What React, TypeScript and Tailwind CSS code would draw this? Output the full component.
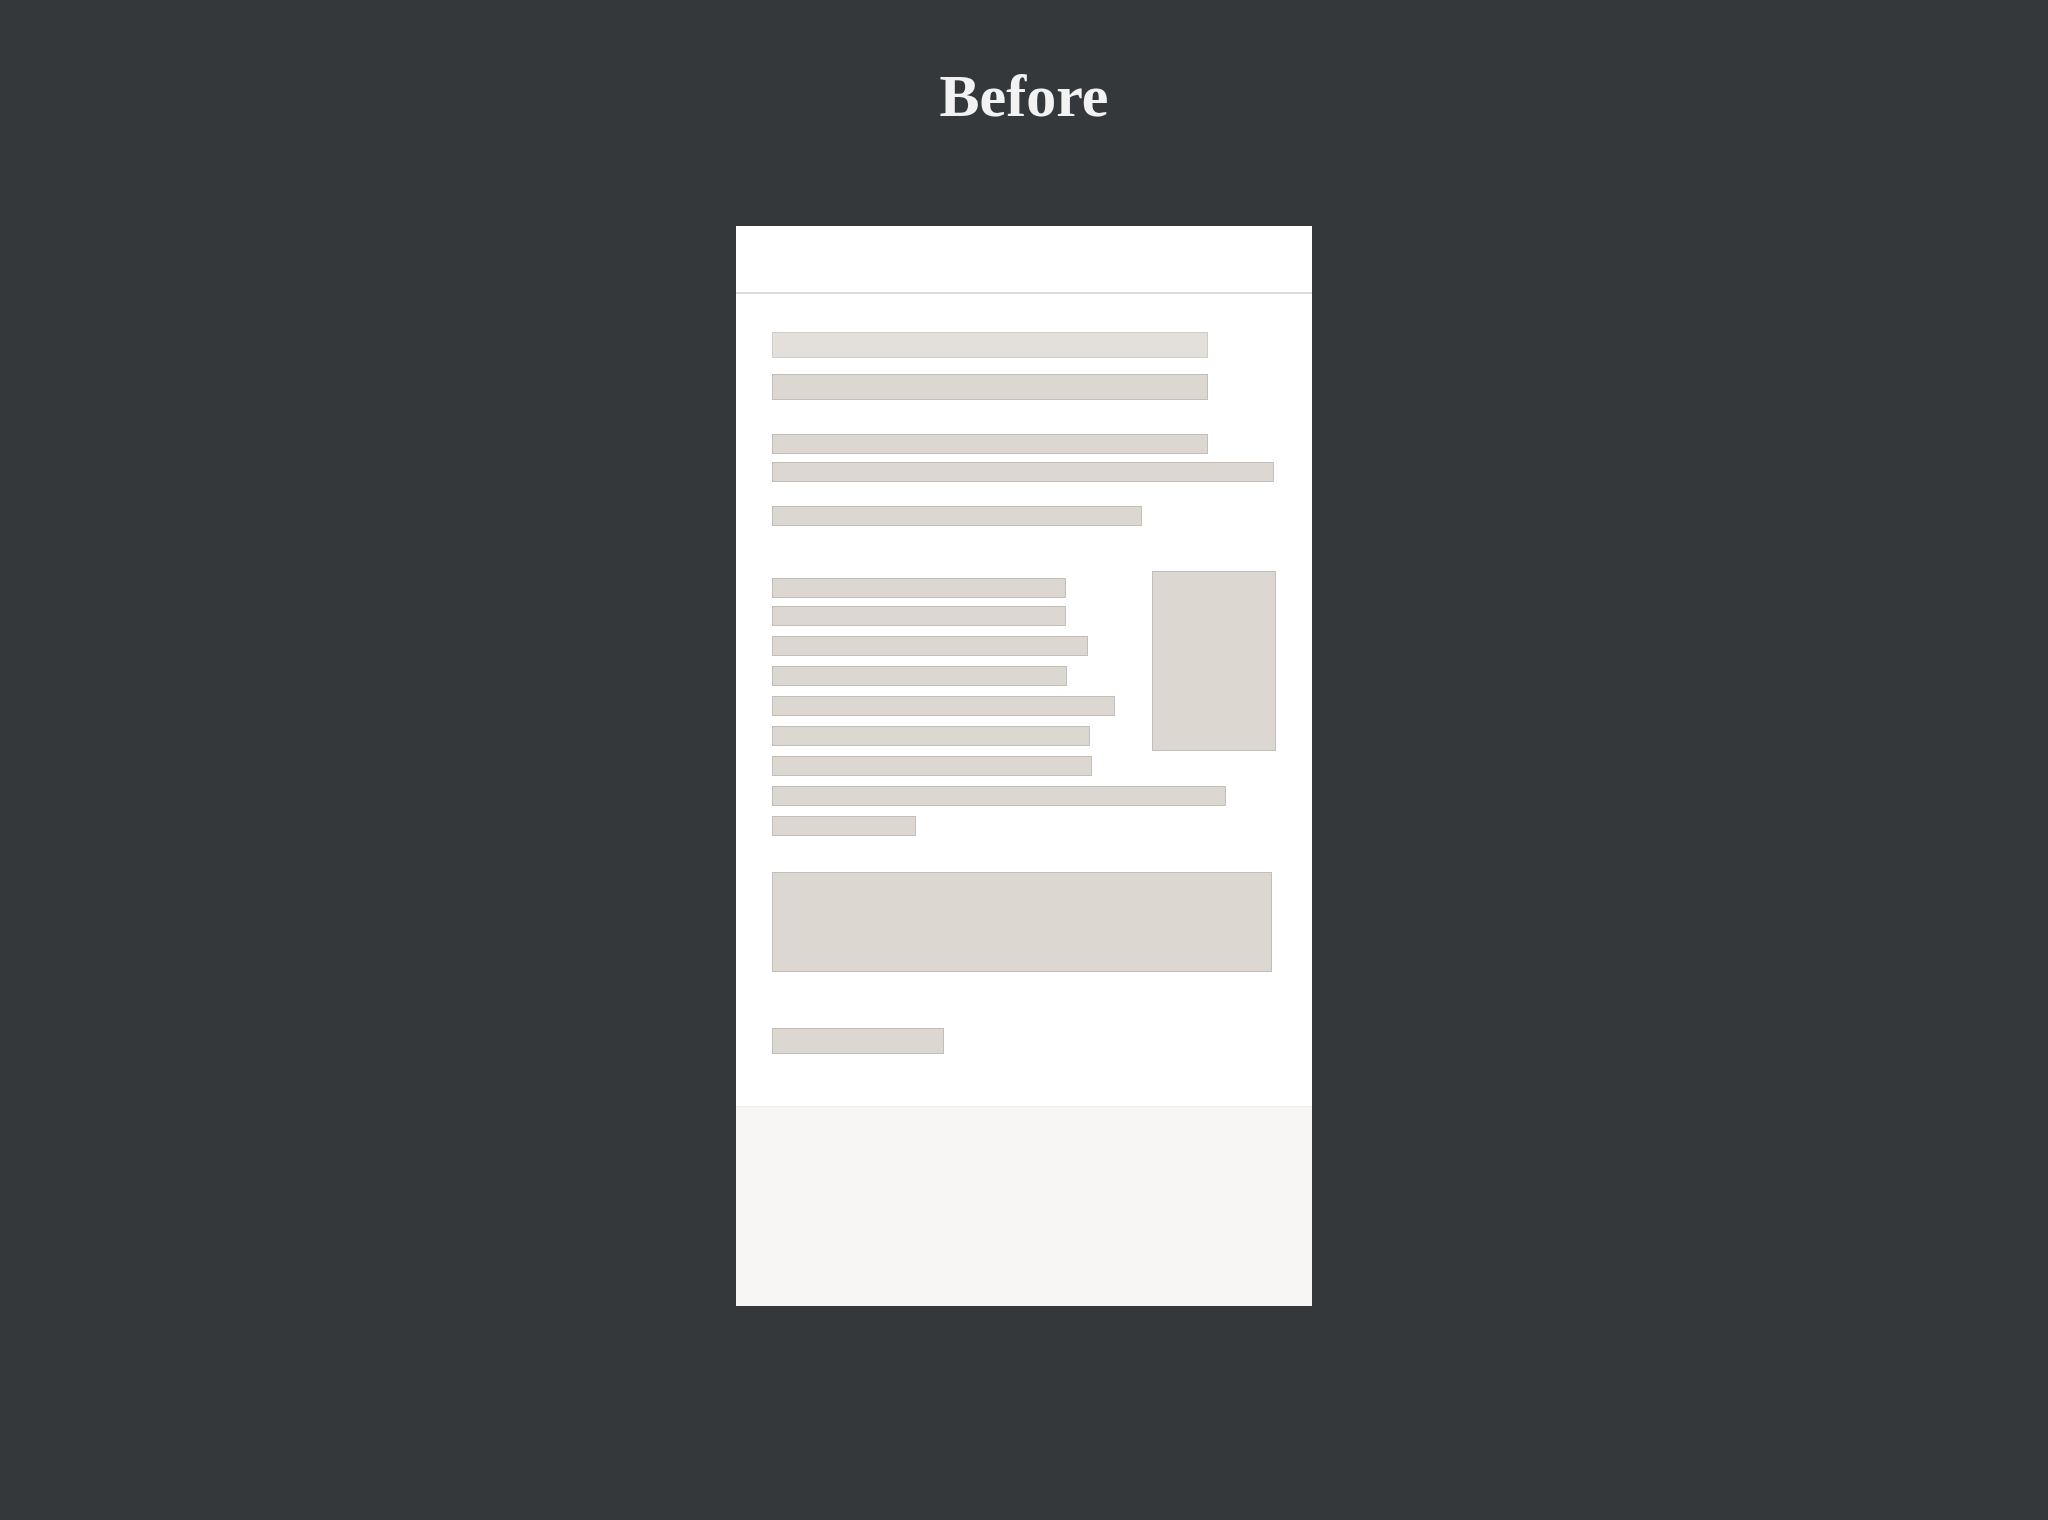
const bar = "border border-[#c3beb7] bg-[#dcd8d1]";

const rows = [294, 294, 316, 295, 343, 318, 320, 454, 144];
const rowGaps = ["mt-0", "mt-[8px]", "mt-[10px]", "mt-[10px]", "mt-[10px]", "mt-[10px]", "mt-[10px]", "mt-[10px]", "mt-[10px]"];

export default function App() {
  return (
    <div className="min-h-[1520px] bg-[#34383b] font-['Liberation_Serif',serif]">
      <h1 className="pt-[66px] text-center text-[60px] leading-none font-bold text-[#f2f2f2]">Before</h1>

      <div className="mx-auto mt-[100px] w-[576px] bg-white">
        {/* header */}
        <div className="h-[68px] border-b-2 border-[#dcdcdc]" />

        {/* body */}
        <div className="px-[36px] pt-[38px] pb-[52px]">
          <div className="h-[26px] w-[436px] border border-[#d2cdc7] bg-[#e3e0db]" />
          <div className={`mt-[16px] h-[26px] w-[436px] ${bar}`} />

          <div className={`mt-[34px] h-[20px] w-[436px] ${bar}`} />
          <div className={`mt-[8px] h-[20px] w-[502px] ${bar}`} />
          <div className={`mt-[24px] h-[20px] w-[370px] ${bar}`} />

          <div className="mt-[45px] flex items-start justify-between">
            <div className="min-w-0 flex-1 pt-[7px]">
              {rows.map((w, i) => (
                <div key={i} className={`h-[20px] ${rowGaps[i]} ${bar}`} style={{ width: w }} />
              ))}
            </div>
            <div className={`h-[180px] w-[124px] shrink-0 ${bar}`} />
          </div>

          <div className={`mt-[36px] h-[100px] w-[500px] ${bar}`} />

          <div className={`mt-[56px] h-[26px] w-[172px] ${bar}`} />
        </div>

        {/* footer */}
        <div className="h-[200px] border-t border-[#efefef] bg-[#f7f6f4]" />
      </div>
    </div>
  );
}
